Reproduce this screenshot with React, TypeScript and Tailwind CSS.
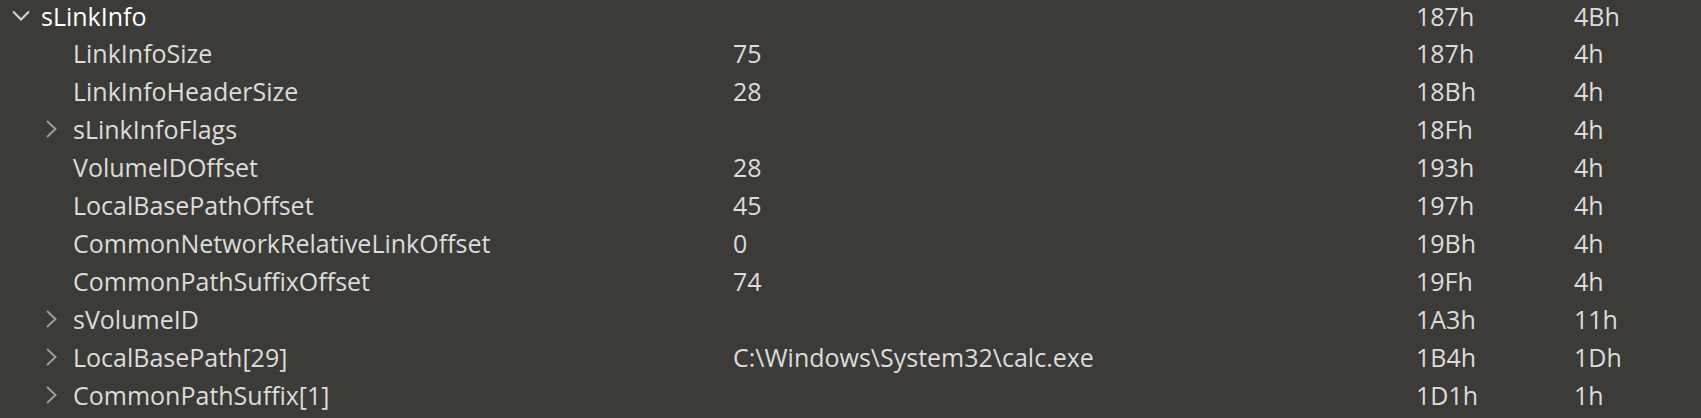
import React from 'react';

interface Field {
  name: string;
  value?: string;
  offset: string;
  size: string;
  level: number;
  expandable?: boolean;
  expanded?: boolean;
}

const fields: Field[] = [
  { name: 'sLinkInfo', offset: '187h', size: '4Bh', level: 0, expandable: true, expanded: true },
  { name: 'LinkInfoSize', value: '75', offset: '187h', size: '4h', level: 1 },
  { name: 'LinkInfoHeaderSize', value: '28', offset: '18Bh', size: '4h', level: 1 },
  { name: 'sLinkInfoFlags', offset: '18Fh', size: '4h', level: 1, expandable: true },
  { name: 'VolumeIDOffset', value: '28', offset: '193h', size: '4h', level: 1 },
  { name: 'LocalBasePathOffset', value: '45', offset: '197h', size: '4h', level: 1 },
  { name: 'CommonNetworkRelativeLinkOffset', value: '0', offset: '19Bh', size: '4h', level: 1 },
  { name: 'CommonPathSuffixOffset', value: '74', offset: '19Fh', size: '4h', level: 1 },
  { name: 'sVolumeID', offset: '1A3h', size: '11h', level: 1, expandable: true },
  { name: 'LocalBasePath[29]', value: 'C:\\Windows\\System32\\calc.exe', offset: '1B4h', size: '1Dh', level: 1, expandable: true },
  { name: 'CommonPathSuffix[1]', offset: '1D1h', size: '1h', level: 1, expandable: true },
];

function Chevron({ expanded }: { expanded?: boolean }) {
  if (expanded) {
    return (
      <svg width="18" height="11" viewBox="0 0 18 11" className="text-[#d6d6d6]">
        <path d="M1 1.5 L9 9.5 L17 1.5" fill="none" stroke="currentColor" strokeWidth="2" />
      </svg>
    );
  }
  return (
    <svg width="13" height="18" viewBox="0 0 13 18" className="text-[#9c9b98]">
      <path d="M2 1 L10.5 9 L2 17" fill="none" stroke="currentColor" strokeWidth="2" />
    </svg>
  );
}

export default function App() {
  return (
    <div
      className="w-[1701px] h-[418px] overflow-hidden bg-[#3c3b37] text-[25px] leading-[28px] text-[#dcdcdc]"
      style={{ fontFamily: '"Segoe UI", "Open Sans", sans-serif' }}
    >
      {/* list is scrolled a few pixels, as in the tree view */}
      <div className="-mt-[3px]">
        {fields.map((f, i) => (
          <div key={i} className={i === 0 ? 'flex items-center h-[37px] whitespace-nowrap' : 'flex items-center h-[38px] whitespace-nowrap'}>
            <div className={f.level === 0 ? 'flex items-center w-[733px]' : 'flex items-center w-[733px] pl-[32px]'}>
              <div className={f.level === 0 ? 'w-[41px] pl-[12px] flex items-center shrink-0' : 'w-[41px] pl-[13px] flex items-center shrink-0'}>
                {f.expandable && <Chevron expanded={f.expanded} />}
              </div>
              <span className={f.level === 0 ? 'text-white' : ''}>{f.name}</span>
            </div>
            <div className="w-[683px]">{f.value}</div>
            <div className="w-[158px]">{f.offset}</div>
            <div>{f.size}</div>
          </div>
        ))}
      </div>
    </div>
  );
}
